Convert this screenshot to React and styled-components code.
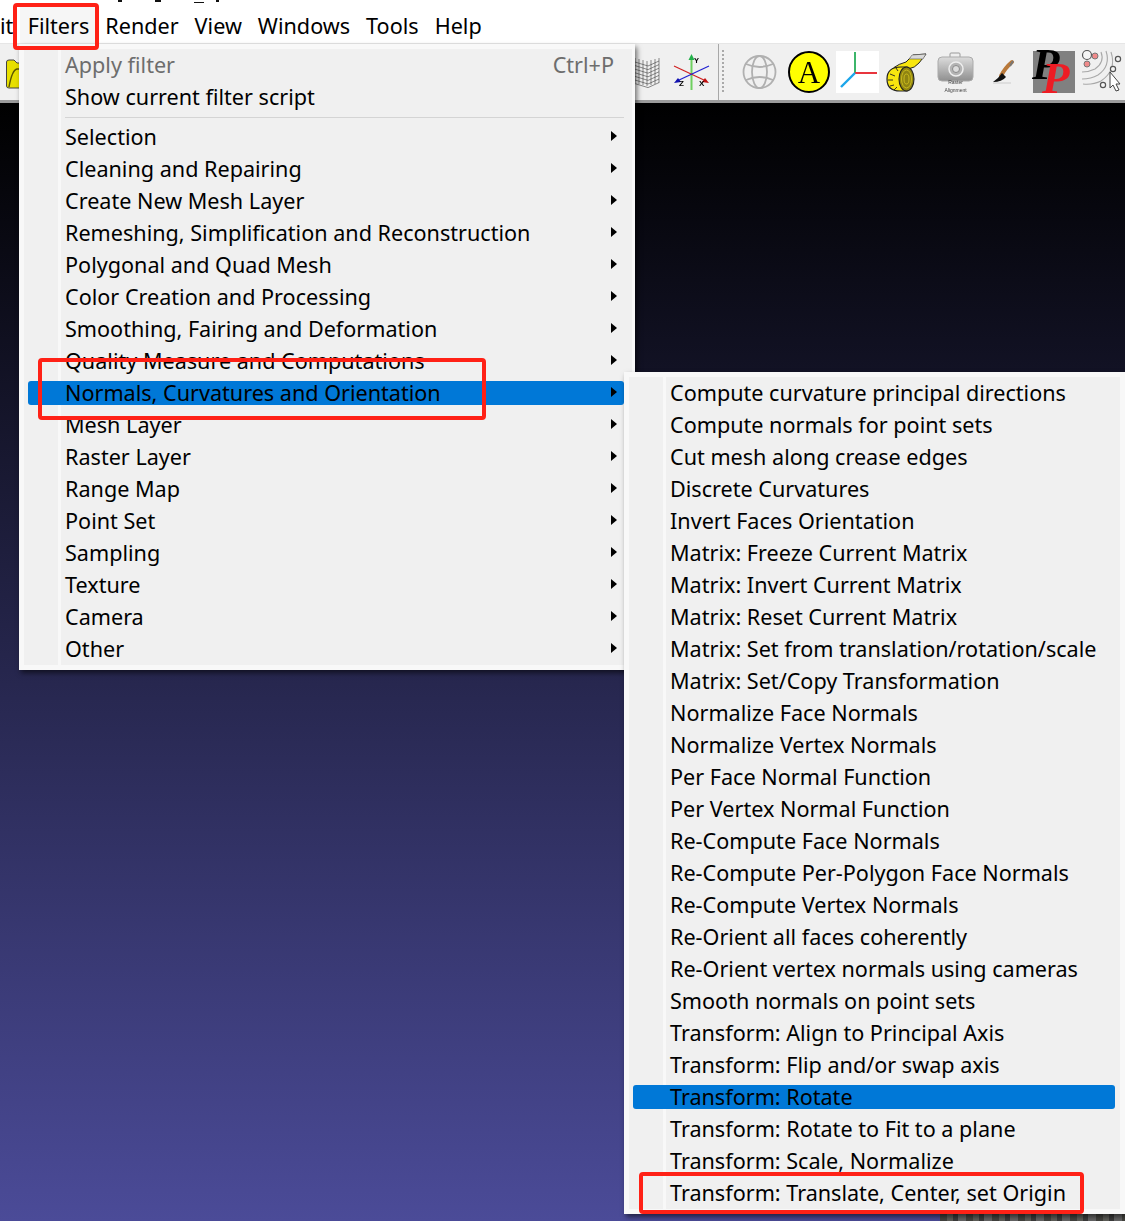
import React from "react";
import styled, { createGlobalStyle } from "styled-components";

const Global = createGlobalStyle`
  html, body { margin: 0; padding: 0; background: #fff; overflow: hidden; }
  #root { width: 1125px; height: 1221px; }
`;

const Page = styled.div`
  position: relative;
  width: 1125px;
  height: 1221px;
  overflow: hidden;
  display: flex;
  flex-direction: column;
  font-family: "Noto Sans", "Open Sans", sans-serif;
  font-size: 21.6px;
  color: #000;
`;

const TitleStrip = styled.div`
  height: 3px;
  flex: none;
  background: #fff;
  display: flex;
  align-items: flex-start;
`;
const Descender = styled.span`
  flex: none;
  height: ${(p) => p.$h}px;
  width: ${(p) => p.$w}px;
  margin-left: ${(p) => p.$ml}px;
  margin-top: ${(p) => p.$mt || 0}px;
  background: #111;
`;

const MenuBar = styled.div`
  height: 40px;
  flex: none;
  display: flex;
  align-items: stretch;
  background: #fff;
  border-bottom: 1px solid #e6e6e6;
`;
const BarItem = styled.div`
  display: flex;
  align-items: center;
  padding: ${(p) => (p.$clip ? "5px 6.3px 0 0" : "5px 8px 0")};
  background: ${(p) => (p.$on ? "#f6f6f6" : "transparent")};
  white-space: nowrap;
`;

const Toolbar = styled.div`
  height: 56px;
  flex: none;
  display: flex;
  align-items: stretch;
  background: #f0f0f0;
  border-bottom: 3px solid #9b9b9b;
`;
const FolderSlot = styled.div`
  width: 635px;
  flex: none;
  padding-left: 6px;
  box-sizing: border-box;
  display: flex;
`;
const Icon = styled.svg`
  flex: none;
  height: 56px;
  margin-left: ${(p) => p.$ml || 0}px;
  filter: blur(0.35px);
  overflow: visible;
`;
const Divider = styled.div`
  flex: none;
  width: 1px;
  margin-left: 6px;
  background: #a8a8a8;
`;
const Handle = styled.div`
  flex: none;
  width: 2px;
  margin: 6px 0 6px 3px;
  background: repeating-linear-gradient(to bottom, #a9a9a9 0 2px, transparent 2px 4px);
`;

const Viewport = styled.div`
  flex: 1;
  position: relative;
  background: linear-gradient(to bottom, #000 0%, #4b4b98 100%);
`;
const GroundStrip = styled.div`
  position: absolute;
  right: 0;
  bottom: 0;
  width: 185px;
  height: 7px;
  background: repeating-linear-gradient(to right, #44443f 0 7px, #5f5f5a 7px 13px, #3c3c3c 13px 18px, #666 18px 26px);
`;

const Panel = styled.div`
  position: absolute;
  left: ${(p) => p.$x}px;
  top: ${(p) => p.$y}px;
  width: ${(p) => p.$w}px;
  height: ${(p) => p.$h}px;
  box-sizing: border-box;
  background: #f0f0f0;
  border: solid #f8f8f8;
  border-width: ${(p) => p.$border};
  box-shadow: 2px 3px 5px rgba(0, 0, 0, 0.55);
  display: flex;
  flex-direction: column;
  &::before {
    content: "";
    position: absolute;
    left: ${(p) => p.$strip}px;
    top: 0;
    bottom: 0;
    width: 3px;
    background: #f8f8f8;
  }
`;
const Row = styled.div`
  position: relative;
  height: 32px;
  flex: none;
  box-sizing: border-box;
  padding: 4px ${(p) => p.$pr}px 4px 4px;
  display: flex;
`;
const RowInner = styled.div`
  flex: 1;
  display: flex;
  align-items: center;
  padding: 0 7px 2px 37px;
  border-radius: 3px;
  background: ${(p) => (p.$active ? "#0078d7" : "transparent")};
  color: ${(p) => (p.$disabled ? "#6d6d6d" : "#000")};
  white-space: nowrap;
`;
const RowLabel = styled.span`
  flex: 1;
`;
const Shortcut = styled.span`
  color: #6d6d6d;
  margin-right: 3px;
`;
const Arrow = styled.span`
  flex: none;
  width: 0;
  height: 0;
  border-left: 6px solid #000;
  border-top: 5px solid transparent;
  border-bottom: 5px solid transparent;
`;
const Separator = styled.div`
  position: relative;
  height: 8px;
  flex: none;
  margin: 0 8px 0 41px;
  display: flex;
  align-items: center;
  &::after {
    content: "";
    flex: 1;
    height: 1px;
    background: #d4d4d4;
  }
`;

const Callout = styled.div`
  position: absolute;
  box-sizing: border-box;
  left: ${(p) => p.$x}px;
  top: ${(p) => p.$y}px;
  width: ${(p) => p.$w}px;
  height: ${(p) => p.$h}px;
  border: 4px solid #ff2116;
  border-radius: 4px;
`;

const box = (x, w) => `${x} 44 ${w} 56`;

const Folder = () => (
  <Icon width="16" viewBox={box(6, 16)}>
    <path d="M6.5 62 Q6.5 60 9 60 L14 60 L17 63 L22 63 L22 88 L9 88 Q6.5 88 6.5 86 Z" fill="#e8e000" stroke="#444" strokeWidth="1" />
    <path d="M9 87 Q12 70 17 69 L22 69" fill="none" stroke="#5b5600" strokeWidth="1.4" />
  </Icon>
);

const Cube = () => {
  const lines = [];
  for (let i = 0; i < 7; i++) {
    const y = 59 + i * 3.6;
    lines.push(<path key={`h${i}`} d={`M635 ${y + 3} L648 ${y + 7} L659 ${y + 2}`} />);
  }
  for (let i = 0; i < 7; i++) {
    const x = 635 + i * 4;
    const off = i < 4 ? i : 6 - i;
    lines.push(<path key={`v${i}`} d={`M${x} ${58 + off} L${x} ${83 + off}`} />);
  }
  return (
    <Icon width="25" viewBox={box(635, 25)}>
      <g fill="none" stroke="#3f3f3f" strokeWidth="0.6">{lines}</g>
    </Icon>
  );
};

const Axes = () => (
  <Icon width="40" $ml={12} viewBox={box(672, 40)}>
    <path d="M691.5 58 V90" stroke="#6fd060" strokeWidth="2" />
    <path d="M691.5 54 L688.5 60 H694.5 Z" fill="#22b04a" />
    <path d="M674 66 L706 81" stroke="#d02020" strokeWidth="1.2" />
    <path d="M709 83 L702 82 L705 78 Z" fill="#c01010" />
    <path d="M709 66 L677 81" stroke="#2020d0" strokeWidth="1.2" />
    <path d="M674 83 L681 82 L678 78 Z" fill="#1010b0" />
    <text x="694" y="63" fontFamily="Liberation Sans" fontWeight="700" fontSize="7.5">Y</text>
    <text x="679" y="86" fontFamily="Liberation Sans" fontWeight="700" fontSize="8">Z</text>
    <text x="699" y="86" fontFamily="Liberation Sans" fontWeight="700" fontSize="8">X</text>
  </Icon>
);

const Globe = () => (
  <Icon width="38" $ml={17} viewBox={box(740, 38)}>
    <g fill="none" stroke="#b0b0b0" strokeWidth="1.8">
      <circle cx="758.5" cy="72" r="16" />
      <ellipse cx="758.5" cy="72" rx="7.5" ry="16" />
      <path d="M745 64 Q758.5 70 772 64" />
      <path d="M745 80 Q758.5 74 772 80" />
    </g>
  </Icon>
);

const Annotate = () => (
  <Icon width="44" $ml={8} viewBox={box(786, 44)}>
    <circle cx="808" cy="72" r="20" fill="#ffff00" stroke="#000" strokeWidth="2" />
    <text x="808" y="83" textAnchor="middle" fontFamily="Liberation Serif" fontSize="31">A</text>
  </Icon>
);

const Frame = () => (
  <Icon width="43" $ml={5} viewBox={box(835, 43)}>
    <rect x="835" y="51" width="43" height="42" fill="#fff" />
    <path d="M854 52 V73" stroke="#3cb56a" strokeWidth="2" />
    <path d="M854 73 H876" stroke="#e8353d" strokeWidth="2" />
    <path d="M854 73 L840 87" stroke="#1ba6ea" strokeWidth="2.4" />
  </Icon>
);

const Tape = () => (
  <Icon width="42" $ml={6} viewBox={box(884, 42)}>
    <path d="M887 76 Q890 66 905 62 L912 55 L925 54 L918 63 Q914 68 907 69 L900 74 Z" fill="#f8e60f" stroke="#222" strokeWidth="1" />
    <path d="M911 55 L925 54 L922 59 L908 59 Z" fill="#d9d9d9" stroke="#555" strokeWidth="0.6" />
    <path d="M900 67 Q886 67 886 79 Q886 91 899 91 L906 91 L906 67 Z" fill="#f8e60f" stroke="#222" strokeWidth="1.2" />
    <ellipse cx="905.5" cy="79" rx="7.5" ry="12" fill="#8f8412" stroke="#222" strokeWidth="1.1" />
    <ellipse cx="905.5" cy="79" rx="5" ry="9" fill="none" stroke="#d8c820" strokeWidth="0.8" />
    <ellipse cx="905.5" cy="79" rx="2.5" ry="5" fill="none" stroke="#d8c820" strokeWidth="0.8" />
    <path d="M889 74 L894 76 M887 80 L892 80 M889 86 L893 85 M893 90 L896 87 M895 68 L897 71" stroke="#222" strokeWidth="0.9" />
  </Icon>
);

const CameraIcon = () => (
  <Icon width="38" $ml={10} viewBox={box(936, 38)}>
    <defs>
      <linearGradient id="cam" x1="0" y1="0" x2="0" y2="1">
        <stop offset="0" stopColor="#dcdcdc" />
        <stop offset="1" stopColor="#8f8f8f" />
      </linearGradient>
    </defs>
    <rect x="949" y="53" width="10" height="6" rx="1" fill="#eee" stroke="#999" />
    <rect x="937" y="57" width="35" height="24" rx="4" fill="url(#cam)" stroke="#aaa" />
    <circle cx="955" cy="69" r="7" fill="#b4b4b4" stroke="#eee" strokeWidth="1.5" />
    <circle cx="955" cy="69" r="3.5" fill="#ddd" stroke="#8a8a8a" />
    <text x="954.5" y="84" textAnchor="middle" fontFamily="Liberation Sans" fontSize="5" fill="#444">Raster</text>
    <text x="954.5" y="91.5" textAnchor="middle" fontFamily="Liberation Sans" fontSize="5" fill="#444">Alignment</text>
  </Icon>
);

const Brush = () => (
  <Icon width="28" $ml={14} viewBox={box(988, 28)}>
    <path d="M1011 62 Q1004 68 1000 76" stroke="#b9793a" strokeWidth="4" strokeLinecap="round" fill="none" />
    <path d="M1012 61 L1009 66" stroke="#777" strokeWidth="2" />
    <path d="M1001 73 L1005 77 Q1001 82 992 82 Q997 79 1001 73 Z" fill="#111" />
    <path d="M992 83 H1010" stroke="#ccc" strokeWidth="1" />
  </Icon>
);

const PPlugin = () => (
  <Icon width="42" $ml={16} viewBox={box(1032, 42)}>
    <rect x="1032" y="51" width="42" height="42" fill="#808080" />
    <text x="1031" y="79" fontFamily="Liberation Serif" fontWeight="700" fontStyle="italic" fontSize="45" fill="#000">P</text>
    <text x="1041" y="93" fontFamily="Liberation Serif" fontWeight="700" fontStyle="italic" fontSize="45" fill="#ed1c24">P</text>
  </Icon>
);

const Picking = () => (
  <Icon width="43" $ml={6} viewBox={box(1080, 43)}>
    <g fill="none" stroke="#a8a8a8" strokeWidth="1.1">
      <path d="M1100 52 Q1104 62 1094 69 Q1088 72 1081 72" />
      <path d="M1105 51 Q1110 66 1097 75 Q1090 79 1081 79" />
      <path d="M1110 52 Q1116 70 1100 81 Q1092 85 1082 84" />
    </g>
    <g fill="#f5f5f5" stroke="#555" strokeWidth="1.2">
      <circle cx="1086" cy="55" r="4.5" />
      <circle cx="1117" cy="59" r="2.6" />
      <circle cx="1112" cy="69" r="2.6" />
      <circle cx="1102" cy="85" r="2.6" />
    </g>
    <circle cx="1094" cy="56" r="3" fill="#f08a8a" stroke="#777" />
    <circle cx="1086" cy="64" r="3" fill="#f08a8a" stroke="#777" />
    <path d="M1109 72 V88 L1112 85 L1115 91 L1118 90 L1115 84 L1119 84 Z" fill="#fff" stroke="#444" strokeWidth="1" />
  </Icon>
);

const mainItems = [
  "Selection",
  "Cleaning and Repairing",
  "Create New Mesh Layer",
  "Remeshing, Simplification and Reconstruction",
  "Polygonal and Quad Mesh",
  "Color Creation and Processing",
  "Smoothing, Fairing and Deformation",
  "Quality Measure and Computations",
  "Normals, Curvatures and Orientation",
  "Mesh Layer",
  "Raster Layer",
  "Range Map",
  "Point Set",
  "Sampling",
  "Texture",
  "Camera",
  "Other",
];

const subItems = [
  "Compute curvature principal directions",
  "Compute normals for point sets",
  "Cut mesh along crease edges",
  "Discrete Curvatures",
  "Invert Faces Orientation",
  "Matrix: Freeze Current Matrix",
  "Matrix: Invert Current Matrix",
  "Matrix: Reset Current Matrix",
  "Matrix: Set from translation/rotation/scale",
  "Matrix: Set/Copy Transformation",
  "Normalize Face Normals",
  "Normalize Vertex Normals",
  "Per Face Normal Function",
  "Per Vertex Normal Function",
  "Re-Compute Face Normals",
  "Re-Compute Per-Polygon Face Normals",
  "Re-Compute Vertex Normals",
  "Re-Orient all faces coherently",
  "Re-Orient vertex normals using cameras",
  "Smooth normals on point sets",
  "Transform: Align to Principal Axis",
  "Transform: Flip and/or swap axis",
  "Transform: Rotate",
  "Transform: Rotate to Fit to a plane",
  "Transform: Scale, Normalize",
  "Transform: Translate, Center, set Origin",
];

export default function App() {
  return (
    <Page>
      <Global />
      <TitleStrip>
        <Descender $ml={118} $w={4} $h={2} />
        <Descender $ml={33} $w={6} $h={2} />
        <Descender $ml={33} $w={10} $h={1} $mt={2} />
        <Descender $ml={12} $w={3} $h={2} />
      </TitleStrip>
      <MenuBar>
        <BarItem $clip>it</BarItem>
        <BarItem $on>Filters</BarItem>
        <BarItem>Render</BarItem>
        <BarItem>View</BarItem>
        <BarItem>Windows</BarItem>
        <BarItem>Tools</BarItem>
        <BarItem>Help</BarItem>
      </MenuBar>
      <Toolbar>
        <FolderSlot>
          <Folder />
        </FolderSlot>
        <Cube />
        <Axes />
        <Divider />
        <Handle />
        <Globe />
        <Annotate />
        <Frame />
        <Tape />
        <CameraIcon />
        <Brush />
        <PPlugin />
        <Picking />
      </Toolbar>
      <Viewport>
        <GroundStrip />
      </Viewport>

      <Panel $x={19} $y={44} $w={616} $h={626} $border="5px 3px 5px 5px" $strip={34}>
        <Row $pr={8}>
          <RowInner $disabled>
            <RowLabel>Apply filter</RowLabel>
            <Shortcut>Ctrl+P</Shortcut>
          </RowInner>
        </Row>
        <Row $pr={8}>
          <RowInner>
            <RowLabel>Show current filter script</RowLabel>
          </RowInner>
        </Row>
        <Separator />
        {mainItems.map((t, i) => (
          <Row key={t} $pr={8}>
            <RowInner $active={i === 8}>
              <RowLabel>{t}</RowLabel>
              <Arrow />
            </RowInner>
          </Row>
        ))}
      </Panel>

      <Panel $x={624} $y={372} $w={501} $h={842} $border="5px 5px 5px 5px" $strip={34}>
        {subItems.map((t, i) => (
          <Row key={t} $pr={5}>
            <RowInner $active={i === 22}>
              <RowLabel>{t}</RowLabel>
            </RowInner>
          </Row>
        ))}
      </Panel>

      <Callout $x={13} $y={3} $w={86} $h={47} />
      <Callout $x={38} $y={358} $w={448} $h={62} />
      <Callout $x={639} $y={1172} $w={445} $h={42} />
    </Page>
  );
}
